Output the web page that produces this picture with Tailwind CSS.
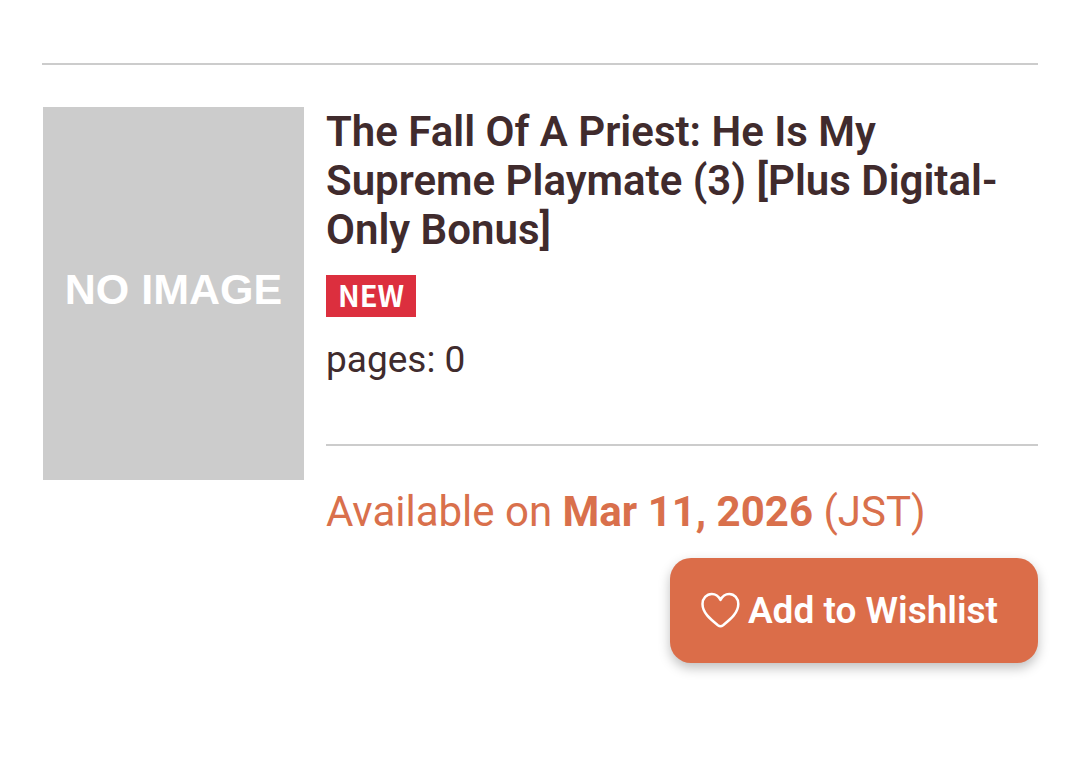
<!DOCTYPE html>
<html lang="en">
  <head>
    <meta charset="UTF-8" />
    <meta name="viewport" content="width=device-width, initial-scale=1.0" />
    <title>The Fall Of A Priest: He Is My Supreme Playmate (3)</title>
    <script src="https://cdn.jsdelivr.net/npm/@tailwindcss/browser@4"></script>
  </head>
  <body class="bg-white text-[#402b2d] font-[Roboto,sans-serif]">
    <main class="px-[42px] pt-[63px] pb-[84px]">
      <article class="flex items-start gap-[22px] border-t-2 border-[#cccccc] pt-[42px]">
        <!-- Cover placeholder -->
        <div class="ml-px flex h-[373px] w-[261px] shrink-0 items-center justify-center bg-[#cccccc] pb-2">
          <span class="font-['Liberation_Sans',sans-serif] text-[43px] leading-none font-bold text-white">NO IMAGE</span>
        </div>

        <div class="min-w-0 flex-1">
          <h2 class="text-[42px] leading-[49px] font-semibold">The Fall Of A Priest: He Is My Supreme Playmate (3) [Plus Digital-Only Bonus]</h2>
          <div class="mt-[21px] flex">
            <span class="bg-[#dc2f3e] px-3 pb-1 font-['Noto_Sans_CJK_JP',sans-serif] text-[29px] leading-[38px] font-bold text-white">NEW</span>
          </div>
          <p class="mt-[21px] text-[37px] leading-[43px]">pages: 0</p>

          <div class="mt-[63px] border-t-2 border-[#cccccc] pt-[41px]">
            <p class="text-[42px] leading-[49px] text-[#d9704c]">Available on <strong class="font-bold">Mar 11, 2026</strong> (JST)</p>
            <div class="mt-[22px] flex justify-end">
              <button type="button" class="flex h-[105px] items-center gap-2 rounded-[21px] bg-[#db6d49] pr-10 pl-[30px] text-[37px] font-semibold text-white shadow-[0_5px_12px_rgba(0,0,0,0.25)]">
                <svg class="h-10 w-10" viewBox="0 0 40 40" fill="none" stroke="currentColor" stroke-width="2.5" stroke-linejoin="round" aria-hidden="true">
                  <path d="M20.5 9 C18.5 5 15.3 3 11.8 3 C6.5 3 2.5 7.5 2.5 13 C2.5 21.6 9.8 27.6 17.9 34.2 C19.5 35.4 21.5 35.4 23.1 34.2 C31.2 27.6 38.3 21.6 38.3 13 C38.3 7.5 34.5 3 29.2 3 C25.7 3 22.5 5 20.5 9 Z" />
                </svg>
                Add to Wishlist
              </button>
            </div>
          </div>
        </div>
      </article>
    </main>
  </body>
</html>
